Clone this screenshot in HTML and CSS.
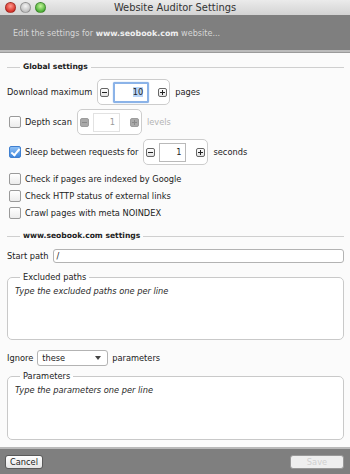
FILE: index.html
```html
<!DOCTYPE html>
<html lang="en">
<head>
    <meta charset="UTF-8">
    <meta name="viewport" content="width=device-width, initial-scale=1.0">
    <title>Website Auditor Settings</title>
    <link rel="stylesheet" href="styles.css">
</head>
<body>
    <div class="window">
        <div class="titlebar">
            <div class="lights">
                <span class="light red"></span>
                <span class="light gray"></span>
                <span class="light green"></span>
            </div>
            <div class="title">Website Auditor Settings</div>
            <div></div>
        </div>
        <div class="header">Edit the settings for <b>www.seobook.com</b> website...</div>
        <div class="rule"></div>

        <div class="content">
            <fieldset class="group">
                <legend>Global settings</legend>

                <div class="row row-download">
                    <span>Download maximum</span>
                    <div class="spinner">
                        <span class="step minus"></span>
                        <span class="num focus wide"><span class="sel">10</span></span>
                        <span class="step plus"></span>
                    </div>
                    <span>pages</span>
                </div>

                <div class="row">
                    <label class="check"><span class="box"></span>Depth scan</label>
                    <div class="spinner disabled">
                        <span class="step minus"></span>
                        <span class="num">1</span>
                        <span class="step plus"></span>
                    </div>
                    <span class="muted">levels</span>
                </div>

                <div class="row">
                    <label class="check"><span class="box checked"></span>Sleep between requests for</label>
                    <div class="spinner">
                        <span class="step minus"></span>
                        <span class="num">1</span>
                        <span class="step plus"></span>
                    </div>
                    <span>seconds</span>
                </div>

                <div class="checks">
                    <label class="check"><span class="box"></span>Check if pages are indexed by Google</label>
                    <label class="check"><span class="box"></span>Check HTTP status of external links</label>
                    <label class="check"><span class="box"></span>Crawl pages with meta NOINDEX</label>
                </div>
            </fieldset>

            <fieldset class="group site">
                <legend>www.seobook.com settings</legend>

                <div class="row row-path">
                    <span>Start path</span>
                    <div class="field">/</div>
                </div>

                <fieldset class="area excluded">
                    <legend>Excluded paths</legend>
                    <textarea placeholder="Type the excluded paths one per line"></textarea>
                </fieldset>

                <div class="row row-ignore">
                    <span>Ignore</span>
                    <div class="select">these<span class="arrow"></span></div>
                    <span>parameters</span>
                </div>

                <fieldset class="area params">
                    <legend>Parameters</legend>
                    <textarea placeholder="Type the parameters one per line"></textarea>
                </fieldset>
            </fieldset>
        </div>

        <div class="footer">
            <button class="btn">Cancel</button>
            <button class="btn" disabled>Save</button>
        </div>
    </div>
</body>
</html>
```

FILE: styles.css
```css
body {
    margin: 0;
    font-family: "DejaVu Sans", "Liberation Sans", sans-serif;
    font-size: 8.25px;
    color: #222;
    background: #fbfbfb;
}
.window {
    width: 350px;
    height: 474px;
    display: flex;
    flex-direction: column;
    overflow: hidden;
}
.titlebar {
    height: 15px;
    display: grid;
    grid-template-columns: 1fr auto 1fr;
    align-items: center;
    background: linear-gradient(#ebebeb, #d3d3d3);
}
.lights {
    display: flex;
    gap: 4px;
    padding-left: 5px;
}
.light {
    width: 11px;
    height: 11px;
    border-radius: 50%;
    box-sizing: border-box;
    border: 1px solid rgba(0, 0, 0, 0.25);
}
.red {
    background: radial-gradient(circle at 50% 35%, #ff9a8f, #d9342b 70%);
}
.gray {
    background: radial-gradient(circle at 50% 35%, #f4f4f4, #c2c2c2 70%);
}
.green {
    background: radial-gradient(circle at 50% 35%, #c6f59b, #4fb33a 70%);
}
.title {
    font-size: 9.9px;
    color: #333;
}
.header {
    height: 35px;
    line-height: 36px;
    padding-left: 13px;
    background: #7f7f7f;
    color: #d6d6d6;
    font-size: 8.1px;
}
.header b {
    color: #efefef;
    font-size: 7.9px;
}
.rule {
    height: 2px;
    background: #bcbcbc;
    border-bottom: 1px solid #9a9a9a;
}
.content {
    flex: 1;
    padding: 7px 6px 0 7px;
}
fieldset {
    margin: 0;
    padding: 0;
    min-width: 0;
}
legend {
    line-height: 14px;
    padding: 0 3px;
}
.group {
    border: none;
    border-top: 1px solid #cfcfcf;
}
.group > legend {
    margin-left: 13px;
    font-weight: bold;
    font-size: 7.6px;
}
.site {
    margin-top: 8px;
}
.row {
    display: flex;
    align-items: center;
    gap: 5px;
    height: 26px;
    margin-top: 4px;
}
.row-download {
    margin-top: 5px;
}
.muted {
    color: #b3b3b3;
}
.spinner {
    display: flex;
    align-items: center;
    box-sizing: border-box;
    height: 26px;
    padding: 0 2px;
    border: 1px solid #cdcdcd;
    border-radius: 5px;
    background: #fff;
}
.step {
    position: relative;
    width: 9px;
    height: 9px;
    box-sizing: border-box;
    border: 1px solid #666;
    border-radius: 2px;
    background: linear-gradient(#fff, #e2e2e2);
}
.step::before,
.step.plus::after {
    content: "";
    position: absolute;
    left: 1px;
    right: 1px;
    top: 3px;
    height: 1px;
    background: #222;
}
.step.plus::after {
    left: 3px;
    right: auto;
    top: 1px;
    width: 1px;
    height: 5px;
}
.num {
    box-sizing: border-box;
    width: 27px;
    height: 19px;
    line-height: 17px;
    margin: 0 10px 0 4px;
    padding-right: 4px;
    text-align: right;
    border: 1px solid #b9b9b9;
    background: #fff;
}
.num.wide {
    width: 36px;
    margin-right: 9px;
}
.num.focus {
    height: 21px;
    line-height: 17px;
    border: 2px solid #8bb3e8;
    border-radius: 2px;
    box-shadow: 0 0 1px #5f94dd;
}
.sel {
    background: #b6d3f7;
}
.disabled .step {
    border-color: #9d9d9d;
    background: #a9a9a9;
}
.disabled .step::before,
.disabled .step::after {
    background: #8a8a8a;
}
.disabled .num {
    border-color: #e2e2e2;
    color: #9a9a9a;
}
.check {
    display: flex;
    align-items: center;
    gap: 4px;
    padding-left: 2px;
}
.box {
    width: 12px;
    height: 12px;
    box-sizing: border-box;
    border: 1px solid #9a9a9a;
    border-radius: 2px;
    background: linear-gradient(#fff, #ececec);
}
.box.checked {
    position: relative;
    border-color: #3f7fd0;
    background: linear-gradient(#8ec0f5, #3d86dc);
}
.box.checked::after {
    content: "";
    position: absolute;
    left: 3px;
    top: 0;
    width: 3px;
    height: 7px;
    border: solid #fff;
    border-width: 0 2px 2px 0;
    transform: rotate(40deg);
}
.checks {
    display: flex;
    flex-direction: column;
    margin-top: 5px;
}
.checks .check {
    height: 17px;
}
.row-path {
    height: 15px;
    margin-top: 5px;
    gap: 4px;
}
.field {
    flex: 1;
    box-sizing: border-box;
    height: 14px;
    line-height: 12px;
    padding-left: 3px;
    border: 1px solid #b3b3b3;
    border-radius: 3px;
    background: #fff;
}
.area {
    border: 1px solid #c9c9c9;
    border-radius: 5px;
    padding: 0 7px;
    background: #fff;
}
.area > legend {
    margin-left: 5px;
}
.area textarea {
    display: block;
    width: 100%;
    height: 55px;
    margin: 0;
    padding: 0;
    border: none;
    outline: none;
    resize: none;
    background: transparent;
    font: italic 8.25px/14px "DejaVu Sans", "Liberation Sans", sans-serif;
}
.area textarea::placeholder {
    color: #2a2a2a;
    opacity: 1;
}
.excluded {
    margin-top: 7px;
}
.row-ignore {
    height: 15px;
    margin-top: 10px;
    gap: 4px;
}
.select {
    position: relative;
    box-sizing: border-box;
    width: 71px;
    height: 16px;
    line-height: 14px;
    padding-left: 4px;
    border: 1px solid #b3b3b3;
    border-radius: 3px;
    background: #fff;
}
.arrow {
    position: absolute;
    right: 6px;
    top: 5px;
    border-left: 3.5px solid transparent;
    border-right: 3.5px solid transparent;
    border-top: 4px solid #444;
}
.params {
    margin-top: 4px;
}
.params textarea {
    height: 56px;
}
.footer {
    height: 25px;
    display: flex;
    align-items: center;
    justify-content: space-between;
    padding: 0 6px 0 5px;
    background: #7f7f7f;
    border-top: 2px solid #b9b9b9;
}
.btn {
    height: 14px;
    padding: 0 4px;
    font: 8.25px "DejaVu Sans", "Liberation Sans", sans-serif;
    color: #222;
    border: 1px solid #5a5a5a;
    border-radius: 3px;
    background: linear-gradient(#ffffff, #e6e6e6);
}
.btn:disabled {
    width: 54px;
    color: #cfcfcf;
    border-color: #999;
    background: #efefef;
}
```
